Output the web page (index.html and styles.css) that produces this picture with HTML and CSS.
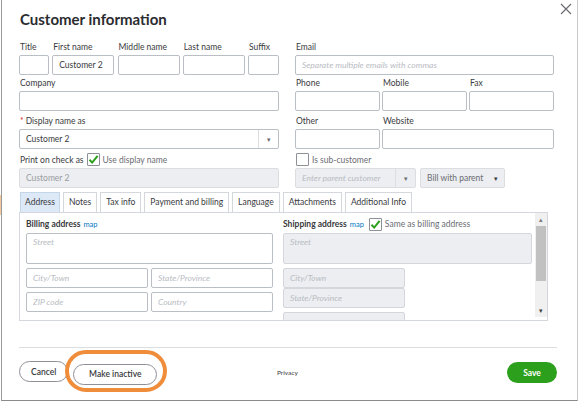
FILE: index.html
```html
<!DOCTYPE html>
<html>

<head>
  <title>Customer information</title>
  <link rel="stylesheet" href="styles.css">
</head>

<body>
  <div class="edge-mark"></div>
  <div class="dialog">
    <button class="close" aria-label="Close">
      <svg width="12" height="12" viewBox="0 0 12 12"><path d="M1 1 L11 11 M11 1 L1 11" stroke="#6b6c72" stroke-width="1.2" fill="none"/></svg>
    </button>
    <h1>Customer information</h1>

    <div class="top">
      <div class="col">
        <div class="row names">
          <div class="field w-title"><label>Title</label><input type="text"></div>
          <div class="field w-name"><label>First name</label><input type="text" value="Customer 2"></div>
          <div class="field w-name"><label>Middle name</label><input type="text"></div>
          <div class="field w-name"><label>Last name</label><input type="text"></div>
          <div class="field w-suffix"><label>Suffix</label><input type="text"></div>
        </div>
        <div class="field"><label>Company</label><input type="text"></div>
        <div class="field gap2">
          <label><span class="req">*</span>Display name as</label>
          <div class="select">
            <span>Customer 2</span>
            <span class="arrow">&#9662;</span>
          </div>
        </div>
        <div class="check-row">
          <span>Print on check as</span>
          <span class="box checked">
            <svg width="11" height="11" viewBox="0 0 11 11"><path d="M1.5 5.8 L4.2 8.6 L9.6 1.8" stroke="#2ca01c" stroke-width="2" fill="none"/></svg>
          </span>
          <span class="muted">Use display name</span>
        </div>
        <input type="text" class="disabled" value="Customer 2" disabled>
      </div>

      <div class="col">
        <div class="field"><label>Email</label><input type="text" class="email" placeholder="Separate multiple emails with commas"></div>
        <div class="row">
          <div class="field w-phone"><label>Phone</label><input type="text"></div>
          <div class="field w-phone"><label>Mobile</label><input type="text"></div>
          <div class="field w-phone"><label>Fax</label><input type="text"></div>
        </div>
        <div class="row gap2">
          <div class="field w-phone"><label>Other</label><input type="text"></div>
          <div class="field w-site"><label>Website</label><input type="text"></div>
        </div>
        <div class="check-row">
          <span class="box"></span>
          <span class="muted">Is sub-customer</span>
        </div>
        <div class="row parent">
          <div class="select off w-parent">
            <span class="ph">Enter parent customer</span>
            <span class="arrow">&#9662;</span>
          </div>
          <div class="select off w-bill">
            <span>Bill with parent</span>
            <span class="arrow dark">&#9662;</span>
          </div>
        </div>
      </div>
    </div>

    <div class="tabs">
      <span class="tab active">Address</span>
      <span class="tab">Notes</span>
      <span class="tab">Tax info</span>
      <span class="tab">Payment and billing</span>
      <span class="tab">Language</span>
      <span class="tab">Attachments</span>
      <span class="tab">Additional Info</span>
    </div>

    <div class="panel">
      <div class="addr">
        <div class="addr-head"><b>Billing address</b> <a href="#">map</a></div>
        <textarea placeholder="Street"></textarea>
        <div class="pair">
          <input type="text" placeholder="City/Town">
          <input type="text" placeholder="State/Province">
        </div>
        <div class="pair">
          <input type="text" placeholder="ZIP code">
          <input type="text" placeholder="Country">
        </div>
      </div>
      <div class="addr ship">
        <div class="addr-head">
          <b>Shipping address</b> <a href="#">map</a>
          <span class="box checked">
            <svg width="11" height="11" viewBox="0 0 11 11"><path d="M1.5 5.8 L4.2 8.6 L9.6 1.8" stroke="#2ca01c" stroke-width="2" fill="none"/></svg>
          </span>
          <span class="muted">Same as billing address</span>
        </div>
        <textarea placeholder="Street" disabled></textarea>
        <div class="stack">
          <input type="text" placeholder="City/Town" disabled>
          <input type="text" placeholder="State/Province" disabled>
          <input type="text" class="cut" disabled>
        </div>
      </div>
      <div class="scrollbar">
        <span class="up">&#9652;</span>
        <span class="thumb"></span>
        <span class="down">&#9662;</span>
      </div>
    </div>

    <div class="footer">
      <div class="left-btns">
        <button class="btn">Cancel</button>
        <span class="ring-wrap">
          <button class="btn">Make inactive</button>
          <span class="ring"></span>
        </span>
      </div>
      <a class="privacy" href="#">Privacy</a>
      <button class="btn save">Save</button>
    </div>
  </div>
</body>

</html>
```

FILE: styles.css
```css
* {
  box-sizing: border-box;
}

body {
  margin: 0;
  font-family: Lato, "Open Sans", sans-serif;
  color: #393a3d;
  background: #fff;
  width: 578px;
  height: 403px;
  overflow: hidden;
  position: relative;
}

.edge-mark {
  position: absolute;
  left: 0;
  top: 195px;
  width: 2px;
  height: 20px;
  background: #f3c89c;
}

.dialog {
  position: relative;
  width: 577px;
  height: 401px;
  margin-left: 1px;
  border-left: 1px solid #9a9a9a;
  border-right: 1px solid #c9c9c9;
  border-bottom: 1px solid #8a8a8a;
  padding: 9px 0 0 17px;
}

.close {
  position: absolute;
  top: 3px;
  right: 5px;
  border: none;
  background: none;
  padding: 0;
}

h1 {
  margin: 0 0 0 1px;
  font-size: 15px;
  font-weight: 700;
  color: #2b2c2f;
  line-height: 20px;
}

.top {
  display: flex;
  gap: 16px;
  margin-top: 10px;
}

.col {
  width: 260px;
  display: flex;
  flex-direction: column;
}

.col + .col {
  width: 259px;
}

.row {
  display: flex;
  gap: 2px;
}

.names {
  gap: 0;
  justify-content: space-between;
}

.field label {
  display: block;
  font-size: 8.5px;
  line-height: 16px;
  color: #393a3d;
  padding-left: 1px;
}

.gap2 {
  margin-top: 2px;
}

.req {
  color: #d52b1e;
  margin-right: 2px;
}

input, textarea {
  display: block;
  width: 100%;
  height: 20px;
  border: 1px solid #babec5;
  border-radius: 2px;
  font-family: inherit;
  font-size: 8.5px;
  color: #393a3d;
  padding: 0 6px;
  background: #fff;
  outline: none;
}

input::placeholder, textarea::placeholder {
  color: #b9bcc2;
  font-style: italic;
}

.w-title { width: 30px; }
.w-name { width: 62px; }
.w-suffix { width: 31px; }
.w-phone { width: 85px; }
.w-site { width: 172px; }
.w-parent { width: 121px; }
.w-bill { width: 85px; }

.email {
  width: 259px;
}

.select {
  display: flex;
  align-items: center;
  justify-content: space-between;
  height: 20px;
  border: 1px solid #babec5;
  border-radius: 2px;
  font-size: 8.5px;
  padding-left: 6px;
  white-space: nowrap;
}

.select .arrow {
  width: 20px;
  height: 100%;
  display: flex;
  align-items: center;
  justify-content: center;
  border-left: 1px solid #dcdde0;
  font-size: 7px;
  color: #6b6c72;
}

.select.off {
  background: #eceef1;
  border-color: #dcdde0;
  color: #6b6c72;
}

.select .ph {
  color: #b9bcc2;
  font-style: italic;
}

.select .arrow.dark {
  width: 16px;
  border-left: none;
  color: #393a3d;
}

.parent {
  gap: 4px;
}

.check-row {
  display: flex;
  align-items: center;
  gap: 3px;
  height: 17px;
  margin: 2px 0 0 1px;
  font-size: 8.5px;
}

.muted {
  color: #6b6c72;
}

.box {
  display: inline-flex;
  align-items: center;
  justify-content: center;
  width: 13px;
  height: 13px;
  border: 1px solid #8d9096;
  border-radius: 1px;
  background: #fff;
}

input.disabled {
  background: #eceef1;
  border-color: #dcdde0;
  color: #9a9ca2;
}

.tabs {
  display: flex;
  gap: 3px;
  margin-top: 4px;
  margin-left: 1px;
}

.tab {
  height: 20px;
  line-height: 19px;
  padding: 0 5px;
  border: 1px solid #d4d7dc;
  border-bottom: none;
  background: #fff;
  font-size: 8.5px;
  color: #393a3d;
}

.tab.active {
  padding: 0 4px;
  background: #dde9f6;
  border-color: #c4d6ea;
}

.panel {
  position: relative;
  display: flex;
  width: 529px;
  height: 109px;
  border: 1px solid #d4d7dc;
  padding: 0 0 0 6px;
  overflow: hidden;
}

.addr {
  width: 247px;
  padding-top: 4px;
}

.ship {
  width: 249px;
  margin-left: 10px;
}

.addr-head {
  display: flex;
  align-items: center;
  gap: 3px;
  height: 14px;
  font-size: 8.5px;
  margin-bottom: 2px;
}

.addr-head b {
  font-weight: 700;
  color: #393a3d;
}

.addr-head a {
  color: #0077c5;
  text-decoration: none;
  font-size: 7.5px;
  margin-right: 2px;
}

textarea {
  height: 31px;
  resize: none;
  padding-top: 3px;
}

.pair {
  display: flex;
  gap: 3px;
  margin-top: 4px;
}

.pair input {
  width: 122px;
}

.ship textarea,
.ship input {
  background: #eceef1;
  border-color: #d4d7dc;
}

.stack {
  margin-top: 4px;
  width: 122px;
}

.stack .cut {
  margin-top: 4px;
}

.scrollbar {
  position: absolute;
  top: 0;
  right: 0;
  width: 12px;
  height: 104px;
  display: flex;
  flex-direction: column;
  align-items: center;
  background: #f0f0f0;
  font-size: 7px;
  color: #7a7a7a;
}

.scrollbar .up {
  height: 13px;
  line-height: 13px;
}

.scrollbar .thumb {
  width: 10px;
  height: 55px;
  background: #c1c1c1;
}

.scrollbar .down {
  margin-top: auto;
  height: 13px;
  line-height: 13px;
  color: #444;
}

.footer {
  display: flex;
  align-items: center;
  width: 538px;
  margin-top: 26px;
  padding-top: 13px;
  border-top: 1px solid #dcdde0;
}

.left-btns {
  display: flex;
  gap: 5px;
  width: 258px;
}

.btn {
  height: 21px;
  border: 1px solid #8d9096;
  border-radius: 11px;
  background: #fff;
  font-family: inherit;
  font-size: 8.5px;
  font-weight: 600;
  color: #393a3d;
  padding: 0 11px;
}

.ring-wrap {
  position: relative;
}

.ring-wrap .btn {
  width: 84px;
}

.ring {
  position: absolute;
  left: -8px;
  top: -11px;
  width: 102px;
  height: 42px;
  border: 4px solid #ef8d3a;
  border-radius: 22px;
}

.privacy {
  flex: 1;
  font-size: 6.5px;
  color: #393a3d;
  text-decoration: none;
}

.save {
  width: 50px;
  border: none;
  background: #2ca01c;
  color: #fff;
  font-weight: 700;
  padding: 0;
}
```
